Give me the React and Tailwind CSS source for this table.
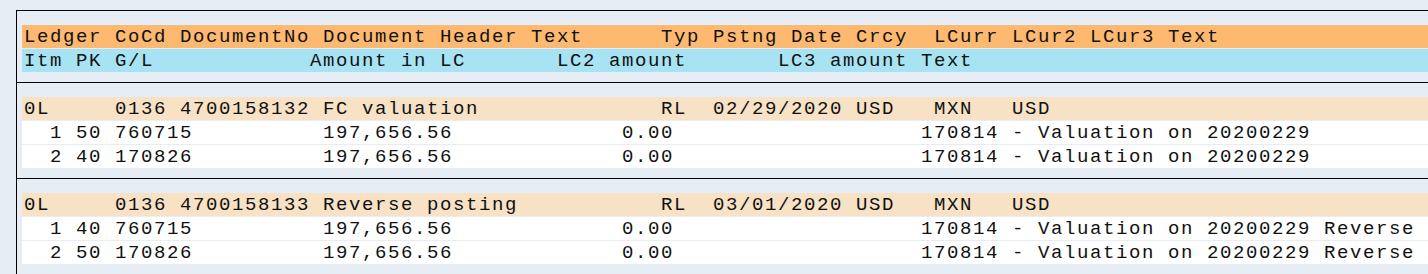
const headerTop =
  'Ledger CoCd DocumentNo Document Header Text      Typ Pstng Date Crcy  LCurr LCur2 LCur3 Text';
const headerSub =
  'Itm PK G/L            Amount in LC       LC2 amount       LC3 amount Text';

const docs = [
  {
    head: '0L     0136 4700158132 FC valuation              RL  02/29/2020 USD   MXN   USD',
    items: [
      '  1 50 760715          197,656.56             0.00                   170814 - Valuation on 20200229',
      '  2 40 170826          197,656.56             0.00                   170814 - Valuation on 20200229',
    ],
  },
  {
    head: '0L     0136 4700158133 Reverse posting           RL  03/01/2020 USD   MXN   USD',
    items: [
      '  1 40 760715          197,656.56             0.00                   170814 - Valuation on 20200229 Reverse',
      '  2 50 170826          197,656.56             0.00                   170814 - Valuation on 20200229 Reverse',
    ],
  },
];

// fixed 13px cells, like the SAP list grid
function Line({ text, tone }) {
  return (
    <div className={`h-[23px] mb-px pt-px pl-[2px] leading-[22px] whitespace-pre overflow-hidden ${tone}`}>
      {text}
    </div>
  );
}

function Block({ children }) {
  return <div className="border-t border-black pt-[14px] pb-[9px] pl-[5px]">{children}</div>;
}

export default function App() {
  return (
    <div className="w-[1428px] h-[274px] bg-[#e6edf5] pt-[10px] pl-4 overflow-hidden">
      <div className="h-full border-l border-black text-[#111] text-[19px] tracking-[1.598px] font-['Liberation_Mono','Courier_New',monospace]">
        <Block>
          <Line text={headerTop} tone="bg-[#fdb96f]" />
          <Line text={headerSub} tone="bg-[#a7e3f3]" />
        </Block>
        {docs.map((d) => (
          <Block key={d.head}>
            <Line text={d.head} tone="bg-[#f7e2c6]" />
            {d.items.map((it) => (
              <Line key={it} text={it} tone="bg-white" />
            ))}
          </Block>
        ))}
      </div>
    </div>
  );
}
